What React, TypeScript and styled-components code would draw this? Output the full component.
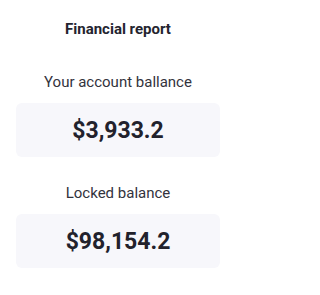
import React from 'react';
import styled, { createGlobalStyle } from 'styled-components';

const GlobalStyle = createGlobalStyle`
  body {
    margin: 0;
    background: #ffffff;
    font-family: Roboto, "Liberation Sans", sans-serif;
  }
`;

const Panel = styled.div`
  box-sizing: border-box;
  width: 237px;
  display: flex;
  flex-direction: column;
  align-items: stretch;
  padding: 19px 17px 0 16px;
`;

const Title = styled.h3`
  margin: 0 0 33px;
  font-size: 15px;
  line-height: 20px;
  font-weight: 700;
  color: #24242f;
  text-align: center;
`;

const Label = styled.div`
  font-size: 15px;
  line-height: 20px;
  color: #33333d;
  text-align: center;
  margin-bottom: 11px;
`;

const AmountBox = styled.div<{ $last?: boolean }>`
  height: 54px;
  display: flex;
  align-items: center;
  justify-content: center;
  background: #f7f7fb;
  border-radius: 6px;
  margin-bottom: ${(p) => (p.$last ? '0' : '26px')};
`;

const Amount = styled.span`
  font-size: 23px;
  font-weight: 700;
  color: #22222c;
`;

const App: React.FC = () => {
  return (
    <>
      <GlobalStyle />
      <Panel>
        <Title>Financial report</Title>
        <Label>Your account ballance</Label>
        <AmountBox>
          <Amount>$3,933.2</Amount>
        </AmountBox>
        <Label>Locked balance</Label>
        <AmountBox $last>
          <Amount>$98,154.2</Amount>
        </AmountBox>
      </Panel>
    </>
  );
};

export default App;
